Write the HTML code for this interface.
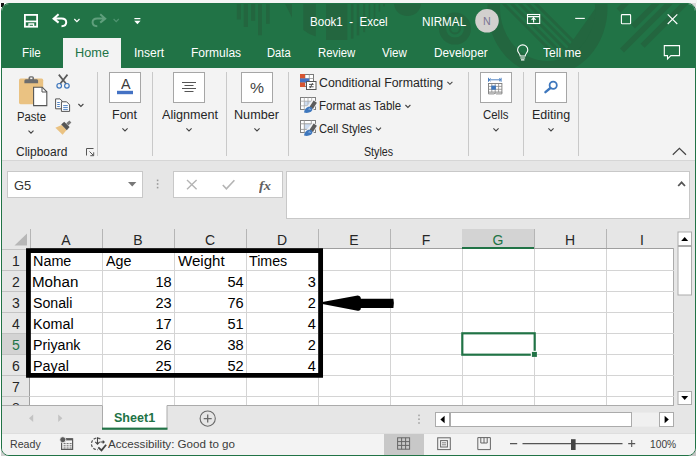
<!DOCTYPE html>
<html lang="en"><head><meta charset="utf-8"><title>Book1 - Excel</title>
<style>

html,body{margin:0;padding:0;background:#fff;}
body{width:699px;height:459px;overflow:hidden;position:relative;
 font-family:"Liberation Sans",sans-serif;}
#win{position:absolute;left:1px;top:3px;width:695px;height:453px;box-sizing:border-box;
 border:1px solid #217346;border-radius:8px;overflow:hidden;background:#e6e6e6;}
#win *{box-sizing:border-box;}
.abs{position:absolute;}
#titlebar{position:absolute;left:-1px;top:-1px;width:695px;height:65px;background:#217346;overflow:hidden;}
#hometab{position:absolute;left:61px;top:34px;width:58px;height:31px;background:#f3f3f3;}
#ribbon{position:absolute;left:-1px;top:64px;width:695px;height:93px;background:#f3f3f3;
 border-bottom:1px solid #d6d6d6;}
.sep{position:absolute;top:4px;width:1px;height:84px;background:#c9c9c9;}
.bigbtn{position:absolute;top:4px;width:32px;height:31px;background:#fff;border:1px solid #a6a6a6;}
#fbar{position:absolute;left:-1px;top:158px;width:695px;height:69px;background:#e6e6e6;}
.box{position:absolute;background:#fff;border:1px solid #c8c8c8;}
#grid{position:absolute;left:-1px;top:225px;width:673px;height:176px;background:#fff;overflow:hidden;}
#colhdr{position:absolute;left:0;top:0;width:673px;height:20px;background:#e6e6e6;}
#colhdr:after{content:'';position:absolute;left:29px;top:19px;width:644px;height:1px;background:#9f9f9f;}
#rowhdr{position:absolute;left:0;top:20px;width:29px;height:160px;background:#e6e6e6;border-right:1px solid #9f9f9f;}
.vl{position:absolute;top:20px;width:1px;height:160px;background:#d4d4d4;}
.hl{position:absolute;left:29px;height:1px;width:644px;background:#d4d4d4;}
.ch{position:absolute;top:0px;height:19px;width:1px;background:#b5b5b5;}
.rh{position:absolute;left:0;width:29px;height:1px;background:#c4c4c4;}
#tabsrow{position:absolute;left:-1px;top:401px;width:695px;height:29px;background:#e6e6e6;}
#tabsrow:before{content:'';position:absolute;left:0;top:0;width:673px;height:1px;background:#ababab;}
#status{position:absolute;left:-1px;top:429px;width:695px;height:24px;background:#f3f3f3;border-top:1px solid #dedede;}
.tx{position:absolute;white-space:pre;line-height:1;transform-origin:0 0;}
svg{position:absolute;left:0;top:0;overflow:visible;}

</style></head><body>
<div class="abs" style="left:0;top:0;width:697px;height:3px;background:#f5f5f5"></div>
<div class="abs" style="left:1px;top:3px;width:3px;height:4px;background:#111"></div>
<div class="abs" style="left:690px;top:3px;width:6px;height:6px;background:#dadada"></div>
<div class="abs" style="left:1px;top:450px;width:6px;height:6px;background:#cfcfcf"></div>
<div class="abs" style="left:690px;top:450px;width:6px;height:6px;background:#c4c4c4"></div>
<div id="win">
<div id="titlebar"><svg width="695" height="65" viewBox="1 3 695 65">
<g fill="#23663f" stroke="none">
<rect x="236.8" y="3" width="4.1" height="16.5"/>
<rect x="243.7" y="3" width="4.3" height="24.0"/>
<rect x="251.1" y="3" width="4.1" height="17.8"/>
<rect x="258" y="3" width="4.0" height="32.3"/>
<rect x="266" y="3" width="3.7" height="20.8"/>
<rect x="326" y="3" width="21.4" height="37.0"/>
<rect x="350.9" y="3" width="2.6" height="35.6"/>
<rect x="356.7" y="3" width="2.6" height="32.4"/>
<rect x="363.2" y="3" width="1.9" height="29.2"/>
<rect x="368.6" y="3" width="1.6" height="24.7"/>
<rect x="373.7" y="3" width="1.7" height="16.3"/>
<rect x="378.6" y="3" width="1.6" height="8.6"/>
<rect x="383.1" y="3" width="1.9" height="3.4"/>
<path d="M303.3 3 V30 Q309 34.5 315.8 36.6 V3 Z"/>
<path d="M284.6 3 H292 V17.7 Z"/>
<path d="M394 3 A13.5 13 0 0 0 421 3 Z"/>
</g>
<g fill="none" stroke="#23663f">
<circle cx="455" cy="28.6" r="12.5" stroke-width="7"/>
<circle cx="455" cy="28.6" r="5" stroke-width="2"/>
<path fill="#23663f" stroke="none" fill-rule="evenodd" d="M487.5 8 a60 67 0 1 0 120 0 a60 67 0 1 0 -120 0 Z M500 8 a47.5 53 0 1 0 95 0 a47.5 53 0 1 0 -95 0 Z"/>
</g>
<clipPath id="disc"><ellipse cx="547.5" cy="8" rx="48" ry="53.5"/></clipPath>
<g clip-path="url(#disc)" fill="#23663f" stroke="#23663f">
<path d="M500 0 L570 70" stroke-width="2.9" fill="none"/>
<path d="M508 0 L578 70" stroke-width="2.9" fill="none"/>
<path d="M516 0 L586 70" stroke-width="2.9" fill="none"/>
<path d="M524 0 L594 70" stroke-width="2.9" fill="none"/>
<path d="M532 0 L602 70" stroke-width="2.9" fill="none"/>
<path d="M566 50 L597 6 L640 6 L640 70 L580 70 Z" stroke="none"/>
</g>
<g fill="none" stroke="#23663f">
<path d="M622 50.6 L674 -1.4" stroke-width="5.6"/>
<path d="M642.6 45.7 L690.7 -2.4" stroke-width="5.6"/>
<path d="M633 26.4 L660 -0.6" stroke-width="5.6"/>
<path d="M618.6 10.4 L629.6 -0.6" stroke-width="5.6"/>
</g>
</svg></div>
<div id="hometab"></div>
<div id="ribbon">
<div class="sep" style="left:96px"></div>
<div class="sep" style="left:151px"></div>
<div class="sep" style="left:225px"></div>
<div class="sep" style="left:287px"></div>
<div class="sep" style="left:467px"></div>
<div class="sep" style="left:522px"></div>
<div class="sep" style="left:577px"></div>
<div class="bigbtn" style="left:108px"></div>
<div class="bigbtn" style="left:172px"></div>
<div class="bigbtn" style="left:240px"></div>
<div class="bigbtn" style="left:479px"></div>
<div class="bigbtn" style="left:534px"></div>
</div>
<div id="fbar">
<div class="box" style="left:6px;top:9px;width:136px;height:27px"></div>
<div class="box" style="left:172px;top:9px;width:110px;height:27px"></div>
<div class="box" style="left:285px;top:9px;width:404px;height:48px"></div>
</div>
<div id="grid">
<div id="colhdr"></div><div id="rowhdr"></div>
<div class="rh" style="top:20px"></div>
<div class="abs" style="left:672px;top:19px;width:1px;height:160px;background:#ababab"></div>
<div class="vl" style="left:101px"></div>
<div class="vl" style="left:173px"></div>
<div class="vl" style="left:245px"></div>
<div class="vl" style="left:317px"></div>
<div class="vl" style="left:389px"></div>
<div class="vl" style="left:461px"></div>
<div class="vl" style="left:533px"></div>
<div class="vl" style="left:605px"></div>
<div class="hl" style="top:41px"></div>
<div class="rh" style="top:41px"></div>
<div class="hl" style="top:62px"></div>
<div class="rh" style="top:62px"></div>
<div class="hl" style="top:83px"></div>
<div class="rh" style="top:83px"></div>
<div class="hl" style="top:104px"></div>
<div class="rh" style="top:104px"></div>
<div class="hl" style="top:125px"></div>
<div class="rh" style="top:125px"></div>
<div class="hl" style="top:146px"></div>
<div class="rh" style="top:146px"></div>
<div class="hl" style="top:167px"></div>
<div class="rh" style="top:167px"></div>
<div class="ch" style="left:29px"></div>
<div class="ch" style="left:101px"></div>
<div class="ch" style="left:173px"></div>
<div class="ch" style="left:245px"></div>
<div class="ch" style="left:317px"></div>
<div class="ch" style="left:389px"></div>
<div class="ch" style="left:461px"></div>
<div class="ch" style="left:533px"></div>
<div class="ch" style="left:605px"></div>
</div>
<div id="tabsrow"></div>
<div id="status"></div>
</div>
<svg width="699" height="459" viewBox="0 0 699 459">
<g fill="none" stroke="#fff">
<rect x="24.9" y="14.9" width="12.2" height="11.8" stroke-width="1.8"/>
<path d="M25 21.4 h12" stroke-width="1.7"/>
<path d="M29 26.8 v-2.8 h4.6 v2.8" stroke-width="1.3"/>
</g>
<path d="M58.6 14.2 L53.6 18.6 L58.6 22.6 M54 18.5 H61.5 C67.8 18.5 67.8 26.2 61.5 26.2" fill="none" stroke="#fff" stroke-width="2" stroke-linejoin="miter"/>
<path d="M74.30 19.00 l2.60 2.70 l2.60 -2.70" fill="none" stroke="#fff" stroke-width="1.2"/>
<path d="M100.2 14.2 L105.2 18.6 L100.2 22.6 M104.8 18.5 H97.3 C91 18.5 91 26.2 97.3 26.2" fill="none" stroke="#5f9f7c" stroke-width="2"/>
<path d="M113.60 19.00 l2.60 2.70 l2.60 -2.70" fill="none" stroke="#4f9370" stroke-width="1.2"/>
<path d="M134.4 18.6 h6" stroke="#fff" stroke-width="1.2"/>
<path d="M134.2 20.8 h6.4 l-3.2 3.4 z" fill="#fff"/>
<circle cx="487" cy="20.8" r="11.8" fill="#d2d0ce"/>
<g fill="none" stroke="#fff" stroke-width="1.1">
<rect x="527.5" y="14.5" width="12.2" height="9"/>
<path d="M527.5 16.6 h12.2 M533.6 22.4 v-4.4 M531.6 19.8 l2 -2 l2 2"/>
<path d="M575.2 18.4 h9.6"/>
<rect x="621.4" y="14.6" width="9.2" height="9.2" rx="0.8"/>
<path d="M667.7 14.4 l9.6 9.6 M677.3 14.4 l-9.6 9.6"/>
<path d="M664.3 45.6 h15.2 v10 h-8.6 l-3.4 3.4 v-3.4 h-3.2 z"/>
<path d="M520.2 56 c0 -2.4 -2.6 -3.2 -2.6 -6 a5.1 5.1 0 0 1 10.2 0 c0 2.8 -2.6 3.6 -2.6 6 z M520.3 58 h4.8 M521 59.9 h3.4"/>
</g>
<rect x="19" y="78.6" width="24.2" height="25.6" rx="1.6" fill="#eac282"/>
<path d="M24.4 83.2 v-2.4 q0 -1.5 1.5 -1.5 h2.6 v-1.3 q0 -1.8 1.8 -1.8 h1.9 q1.8 0 1.8 1.8 v1.3 h2.6 q1.5 0 1.5 1.5 v2.4 z" fill="#6d6d6d"/>
<rect x="30.2" y="77.5" width="2.2" height="1.6" fill="#f3f3f3"/>
<path d="M33.6 87.2 h8.6 l4.6 4.6 v13.8 h-13.2 z" fill="#fff" stroke="#555" stroke-width="1.1"/>
<path d="M42 87.4 v4.6 h4.6" fill="none" stroke="#555" stroke-width="1"/>
<path d="M28.50 130.60 l2.50 2.50 l2.50 -2.50" fill="none" stroke="#444" stroke-width="1.1"/>
<path d="M58.8 74.6 L66.3 84 M67.5 74.6 L60 84" stroke="#5a5a5a" stroke-width="1.7" fill="none"/>
<circle cx="59.2" cy="85.8" r="2.3" fill="none" stroke="#3e77bd" stroke-width="1.2"/>
<circle cx="66.9" cy="85.8" r="2.3" fill="none" stroke="#3e77bd" stroke-width="1.2"/>
<path d="M55.6 98.9 h4.4 l2.2 2.2 v7.7 h-6.6 z" fill="#fff" stroke="#555" stroke-width="1"/>
<path d="M61.4 101.8 h5.2 l3 3 v6.6 h-8.2 z" fill="#fff" stroke="#555" stroke-width="1"/>
<path d="M57.2 102.5 h2.6 M57.2 104.5 h2.6 M57.2 106.5 h2.6 M63.2 105.6 h4.6 M63.2 107.6 h4.6 M63.2 109.6 h4.6" stroke="#3e77bd" stroke-width="0.9"/>
<path d="M78.40 104.00 l2.50 2.50 l2.50 -2.50" fill="none" stroke="#444" stroke-width="1.1"/>
<path d="M55.4 127.8 L61.6 125 L66.6 130 L62.6 134.8 Z" fill="#eac282"/>
<path d="M61.2 124.6 L64.2 121.8 L69.6 127 L66.8 130.2 Z" fill="#555"/>
<path d="M66.2 123.2 L69.4 120.4 L71.4 122.4 L68.4 125.4 Z" fill="#7a7a7a"/>
<path d="M86.5 155.5 v-7 h7 M89.5 151.5 l4 4 M93.7 152.3 v3.4 h-3.4" fill="none" stroke="#555" stroke-width="1"/>
<rect x="117" y="90.8" width="16" height="3.4" fill="#4472c4"/>
<path d="M182 82.5 h14 M184.5 85.5 h9 M182 88.5 h14 M184.5 91.5 h9" stroke="#555" stroke-width="1"/>
<path d="M122.40 128.40 l2.60 2.60 l2.60 -2.60" fill="none" stroke="#444" stroke-width="1.1"/>
<path d="M186.40 128.40 l2.60 2.60 l2.60 -2.60" fill="none" stroke="#444" stroke-width="1.1"/>
<path d="M254.40 128.40 l2.60 2.60 l2.60 -2.60" fill="none" stroke="#444" stroke-width="1.1"/>
<path d="M493.40 128.40 l2.60 2.60 l2.60 -2.60" fill="none" stroke="#444" stroke-width="1.1"/>
<path d="M548.40 128.40 l2.60 2.60 l2.60 -2.60" fill="none" stroke="#444" stroke-width="1.1"/>
<rect x="300.5" y="74.5" width="13" height="12" fill="#fff" stroke="#7a7a7a" stroke-width="1"/>
<path d="M305 74.5 v12 M309.3 74.5 v12 M300.5 78.5 h13 M300.5 82.5 h13" stroke="#9a9a9a" stroke-width="0.8"/>
<rect x="300" y="74" width="5" height="4.5" fill="#d65532"/>
<rect x="300" y="78.5" width="5" height="4" fill="#4472c4"/>
<rect x="300" y="82.5" width="5" height="4.5" fill="#d65532"/>
<rect x="305" y="78.5" width="4.3" height="4" fill="#4472c4"/>
<rect x="306.5" y="81.5" width="9.5" height="8" fill="#fff" stroke="#555" stroke-width="1"/>
<path d="M309 84.4 h4.6 M309 86.8 h4.6 M312.6 83 l-2.6 5.2" stroke="#444" stroke-width="0.9" fill="none"/>
<rect x="300.5" y="97.5" width="15" height="12" fill="#fff" stroke="#7f7f7f" stroke-width="1"/>
<rect x="304.3" y="101.2" width="7.4" height="4.6" fill="#cddcf0"/>
<path d="M304.3 97.5 v12 M308 97.5 v12 M311.7 97.5 v12 M300.5 101.2 h15 M300.5 105.8 h15" stroke="#a8a8a8" stroke-width="0.8"/>
<path d="M313 99.2 L318 102.4 L313.6 109.6 L308.4 113.6 L302.6 113.4 L306 107.4 Z" fill="#f3f3f3"/>
<path d="M313.6 100.6 L316.9 102.8 L312.9 108.9 L309.6 106.7 Z" fill="#5b5b5b"/>
<path d="M304 112.6 q0.6 -4.2 4.2 -5.8 q2.4 -0.6 3.8 1 q1.2 2.2 -1 4 q-3 1.8 -7 0.8 z" fill="#3e77bd"/>
<path d="M308.6 109.2 q1.3 -0.6 2 0.3" fill="none" stroke="#cfe0f5" stroke-width="0.8"/>
<rect x="300.5" y="120.5" width="15" height="12" fill="#fff" stroke="#7f7f7f" stroke-width="1"/>
<rect x="304.3" y="123.8" width="7" height="5.6" fill="#cddcf0"/>
<path d="M304.3 120.5 v12 M311.3 120.5 v12 M300.5 123.8 h15 M300.5 129.4 h15" stroke="#9a9a9a" stroke-width="0.9"/>
<path d="M313 122.2 L318 125.4 L313.6 132.6 L308.4 136.6 L302.6 136.4 L306 130.4 Z" fill="#f3f3f3"/>
<path d="M313.6 123.6 L316.9 125.8 L312.9 131.9 L309.6 129.7 Z" fill="#5b5b5b"/>
<path d="M304 135.6 q0.6 -4.2 4.2 -5.8 q2.4 -0.6 3.8 1 q1.2 2.2 -1 4 q-3 1.8 -7 0.8 z" fill="#3e77bd"/>
<path d="M308.6 132.2 q1.3 -0.6 2 0.3" fill="none" stroke="#cfe0f5" stroke-width="0.8"/>
<path d="M447.40 81.80 l2.50 2.50 l2.50 -2.50" fill="none" stroke="#444" stroke-width="1.1"/>
<path d="M405.40 105.00 l2.50 2.50 l2.50 -2.50" fill="none" stroke="#444" stroke-width="1.1"/>
<path d="M376.00 127.60 l2.50 2.50 l2.50 -2.50" fill="none" stroke="#444" stroke-width="1.1"/>
<path d="M488.5 79.8 h12.6 M488.5 77.8 v4 M501.1 77.8 v4 M490.6 78.4 l-1.6 1.4 l1.6 1.4 M499 78.4 l1.6 1.4 l-1.6 1.4" fill="none" stroke="#3e77bd" stroke-width="0.9"/>
<rect x="488.5" y="83.5" width="13.4" height="8.6" fill="#fff" stroke="#7a7a7a" stroke-width="0.9"/>
<path d="M491.8 83.5 v8.6 M495.2 83.5 v8.6 M498.6 83.5 v8.6 M488.5 86.4 h13.4 M488.5 89.3 h13.4" stroke="#8a8a8a" stroke-width="0.8"/>
<rect x="491.3" y="85.6" width="4.6" height="4.1" fill="#3e77bd"/>
<path d="M488.5 92.1 v1.8 h5.6 l1.1 -0.9 l1.1 0.9 h5.6 v-1.8" fill="none" stroke="#7a7a7a" stroke-width="0.9"/>
<circle cx="553.2" cy="85.3" r="3.6" fill="none" stroke="#3e77bd" stroke-width="1.8"/>
<path d="M550.4 88 L545.4 92.2" stroke="#3e77bd" stroke-width="2.3" stroke-linecap="round"/>
<path d="M672.8 154.8 l6.6 -6.4 l6.6 6.4" fill="none" stroke="#444" stroke-width="1.2"/>
<path d="M128 182 h8.4 l-4.2 4.4 z" fill="#777"/>
<g fill="#9a9a9a"><rect x="156.8" y="179.6" width="1.6" height="1.6"/><rect x="156.8" y="183.2" width="1.6" height="1.6"/><rect x="156.8" y="186.8" width="1.6" height="1.6"/></g>
<path d="M187 180 l9.6 9.2 M196.6 180 l-9.6 9.2" stroke="#b4b4b4" stroke-width="1.4" fill="none"/>
<path d="M222.8 185 l3.6 3.8 l8 -8.6" stroke="#b4b4b4" stroke-width="1.6" fill="none"/>
<path d="M678.2 186 l3.4 -3.6 l3.4 3.6" stroke="#555" stroke-width="1.8" fill="none"/>
<path d="M27 233.5 V245.5 H14.5 Z" fill="#b7b7b7"/>
<rect x="462" y="229" width="72" height="19" fill="#d3d3d3"/>
<rect x="462" y="247" width="72" height="2" fill="#217346"/>
<rect x="2" y="334" width="27" height="20" fill="#d3d3d3"/>
<rect x="28" y="334" width="2" height="20" fill="#217346"/>
<path d="M28.45 250.55 H320.62 V375.45 H28.45 Z" fill="none" stroke="#000" stroke-width="4.8"/>
<path d="M322.4 302 L356.3 295.8 Q358 295.3 359.4 296 Q360.8 296.8 360.9 298.8 L393.4 298.8 Q394.4 303.4 393.4 307.9 L360.9 307.9 Q360.8 310 359.4 310.6 Q358 311.1 356.3 310.5 L322.4 304.1 Z" fill="#000"/>
<rect x="462.3" y="333.3" width="72.4" height="21.4" fill="none" stroke="#217346" stroke-width="2.2"/>
<rect x="530.8" y="350.8" width="6.4" height="6.4" fill="#fff"/>
<rect x="531.9" y="351.9" width="5" height="5" fill="#217346"/>
<rect x="678" y="232" width="13.5" height="13.5" fill="#fff" stroke="#ababab" stroke-width="1"/>
<path d="M681.2 241 h7 l-3.5 -4 z" fill="#000"/>
<rect x="678" y="246.5" width="13.5" height="48.5" fill="#fff" stroke="#ababab" stroke-width="1"/>
<rect x="678" y="391.5" width="13.5" height="13" fill="#fff" stroke="#ababab" stroke-width="1"/>
<path d="M681.2 396 h7 l-3.5 4 z" fill="#000"/>
<path d="M33.2 414.6 v7.4 l-4.2 -3.7 z" fill="#c3c3c3"/>
<path d="M58.2 414.6 v7.4 l4.2 -3.7 z" fill="#c3c3c3"/>
<rect x="102.5" y="405" width="64.5" height="23" fill="#fff"/>
<path d="M102.5 405.5 v23 M167 405.5 v23" stroke="#ababab" stroke-width="1"/>
<rect x="102" y="427.6" width="65.5" height="2.2" fill="#217346"/>
<circle cx="207.7" cy="418.6" r="7.6" fill="none" stroke="#6a6a6a" stroke-width="1.1"/>
<path d="M203.7 418.6 h8 M207.7 414.6 v8" stroke="#6a6a6a" stroke-width="1.3"/>
<g fill="#a5a5a5"><rect x="418.2" y="414.6" width="1.6" height="1.6"/><rect x="418.2" y="418.4" width="1.6" height="1.6"/><rect x="418.2" y="422.2" width="1.6" height="1.6"/></g>
<rect x="450" y="412.6" width="209" height="14" fill="#f0f0f0"/>
<rect x="435.5" y="412.5" width="14" height="14" fill="#fff" stroke="#ababab" stroke-width="1"/>
<path d="M444.6 415.8 v7.4 l-4.2 -3.7 z" fill="#000"/>
<rect x="450.5" y="412.5" width="181" height="14" fill="#fff" stroke="#ababab" stroke-width="1"/>
<rect x="659.5" y="412.5" width="14" height="14" fill="#fff" stroke="#ababab" stroke-width="1"/>
<path d="M664.6 415.8 v7.4 l4.2 -3.7 z" fill="#000"/>
<rect x="61.6" y="438.8" width="11" height="10.6" fill="#f3f3f3" stroke="#5a5a5a" stroke-width="1.2"/>
<path d="M65.5 439.4 h7" stroke="#5a5a5a" stroke-width="2"/>
<path d="M63.6 443.6 h2 M66.6 443.6 h2 M69.6 443.6 h2 M63.6 445.8 h2 M66.6 445.8 h2 M69.6 445.8 h2 M63.6 448 h2 M66.6 448 h2 M69.6 448 h2" stroke="#6a6a6a" stroke-width="1"/>
<circle cx="62.8" cy="439.7" r="3" fill="#5a5a5a" stroke="#f3f3f3" stroke-width="0.8"/>
<path d="M100.4 439 A5.8 5.8 0 1 0 98 449.6" fill="none" stroke="#555" stroke-width="1.2" stroke-dasharray="2.8 1.5"/>
<path d="M97.5 437.3 V444 M95.3 441.9 l2.2 2.3 l2.2 -2.3 M100.4 442 h3.6 M102.7 440.6 l1.5 1.4 l-1.5 1.4" fill="none" stroke="#444" stroke-width="1.1"/>
<path d="M98.3 447.3 L101.5 450.4 L106.1 444.7" fill="none" stroke="#444" stroke-width="1.8"/>
<rect x="384" y="434" width="40" height="21" fill="#c8c8c8"/>
<rect x="397.6" y="437.8" width="12" height="11.4" fill="none" stroke="#666" stroke-width="1"/>
<path d="M401.6 437.8 v11.4 M405.6 437.8 v11.4 M397.6 441.6 h12 M397.6 445.4 h12" stroke="#666" stroke-width="1"/>
<rect x="437.7" y="437.8" width="12.6" height="11.8" fill="none" stroke="#666" stroke-width="1"/>
<rect x="440.6" y="440.6" width="6.8" height="6.4" fill="none" stroke="#666" stroke-width="1"/>
<path d="M442 442.8 h4 M442 444.8 h4" stroke="#666" stroke-width="0.8"/>
<path d="M477.8 437.6 v12 h12.6 v-12 z M480.8 437.6 v5.4 h6.4 v-5.4 M484 437.6 v5.4" fill="none" stroke="#666" stroke-width="1"/>
<path d="M510 443.6 h7.2 M522.5 443.6 h100 M628.2 443.6 h7 M631.7 440.1 v7" stroke="#555" stroke-width="1.1"/>
<rect x="571" y="439.2" width="4.6" height="10.8" fill="#444"/>
</svg>
<div id="texts" style="position:absolute;left:0;top:0;width:699px;height:459px">
<span class="tx" id="t0" style="left:309.85px;top:16.00px;font-size:12px;color:#fff;font-weight:400;transform:scaleX(0.9624);">Book1  -  Excel</span>
<span class="tx" id="t1" style="left:421.88px;top:16.00px;font-size:12px;color:#fff;font-weight:400;transform:scaleX(0.9732);">NIRMAL</span>
<span class="tx" id="t2" style="left:483.43px;top:16.00px;font-size:10.5px;color:#7a7592;font-weight:400;transform:scaleX(1.0194);">N</span>
<span class="tx" id="t3" style="left:21.75px;top:47.00px;font-size:12px;color:#fff;font-weight:400;transform:scaleX(0.9740);">File</span>
<span class="tx" id="t4" style="left:134.11px;top:47.00px;font-size:12px;color:#fff;font-weight:400;transform:scaleX(1.0059);">Insert</span>
<span class="tx" id="t5" style="left:190.62px;top:47.00px;font-size:12px;color:#fff;font-weight:400;transform:scaleX(1.0019);">Formulas</span>
<span class="tx" id="t6" style="left:266.98px;top:47.00px;font-size:12px;color:#fff;font-weight:400;transform:scaleX(0.9337);">Data</span>
<span class="tx" id="t7" style="left:318.42px;top:47.00px;font-size:12px;color:#fff;font-weight:400;transform:scaleX(0.9475);">Review</span>
<span class="tx" id="t8" style="left:382.35px;top:47.00px;font-size:12px;color:#fff;font-weight:400;transform:scaleX(0.9677);">View</span>
<span class="tx" id="t9" style="left:433.87px;top:47.00px;font-size:12px;color:#fff;font-weight:400;transform:scaleX(0.9804);">Developer</span>
<span class="tx" id="t10" style="left:543.01px;top:47.00px;font-size:12px;color:#fff;font-weight:400;transform:scaleX(1.0027);">Tell me</span>
<span class="tx" id="t11" style="left:75.22px;top:47.00px;font-size:12px;color:#217346;font-weight:400;transform:scaleX(1.0611);">Home</span>
<span class="tx" id="t12" style="left:16.75px;top:111.00px;font-size:12px;color:#262626;font-weight:400;transform:scaleX(0.9428);">Paste</span>
<span class="tx" id="t13" style="left:16.16px;top:146.00px;font-size:12px;color:#262626;font-weight:400;transform:scaleX(0.9995);">Clipboard</span>
<span class="tx" id="t14" style="left:112.34px;top:109.00px;font-size:12px;color:#262626;font-weight:400;transform:scaleX(1.0422);">Font</span>
<span class="tx" id="t15" style="left:161.70px;top:109.00px;font-size:12px;color:#262626;font-weight:400;transform:scaleX(1.0519);">Alignment</span>
<span class="tx" id="t16" style="left:234.33px;top:109.00px;font-size:12px;color:#262626;font-weight:400;transform:scaleX(1.0518);">Number</span>
<span class="tx" id="t17" style="left:319.14px;top:77.00px;font-size:12px;color:#262626;font-weight:400;transform:scaleX(1.0287);">Conditional Formatting</span>
<span class="tx" id="t18" style="left:318.96px;top:100.00px;font-size:12px;color:#262626;font-weight:400;transform:scaleX(0.9585);">Format as Table</span>
<span class="tx" id="t19" style="left:319.31px;top:123.00px;font-size:12px;color:#262626;font-weight:400;transform:scaleX(0.9340);">Cell Styles</span>
<span class="tx" id="t20" style="left:364.00px;top:146.00px;font-size:12px;color:#262626;font-weight:400;transform:scaleX(0.8895);">Styles</span>
<span class="tx" id="t21" style="left:483.39px;top:109.00px;font-size:12px;color:#262626;font-weight:400;transform:scaleX(0.9512);">Cells</span>
<span class="tx" id="t22" style="left:531.79px;top:109.00px;font-size:12px;color:#262626;font-weight:400;transform:scaleX(1.0385);">Editing</span>
<span class="tx" id="t23" style="left:120.82px;top:77.00px;font-size:14px;color:#3b3b3b;font-weight:400;transform:scaleX(1.0234);">A</span>
<span class="tx" id="t24" style="left:250.14px;top:81.00px;font-size:14.5px;color:#444;font-weight:400;transform:scaleX(1.0858);">%</span>
<span class="tx" id="t25" style="left:13.94px;top:179.00px;font-size:13px;color:#333;font-weight:400;transform:scaleX(0.9951);">G5</span>
<span class="tx" id="t26" style="left:258.84px;top:179.00px;font-size:13px;color:#606060;font-weight:700;transform:scaleX(1.1123);font-style:italic;font-family:'Liberation Serif',serif;">fx</span>
<span class="tx" id="t27" style="left:46.00px;width:40px;text-align:center;top:233.00px;font-size:14px;color:#262626;font-weight:400;">A</span>
<span class="tx" id="t28" style="left:118.00px;width:40px;text-align:center;top:233.00px;font-size:14px;color:#262626;font-weight:400;">B</span>
<span class="tx" id="t29" style="left:190.00px;width:40px;text-align:center;top:233.00px;font-size:14px;color:#262626;font-weight:400;">C</span>
<span class="tx" id="t30" style="left:262.00px;width:40px;text-align:center;top:233.00px;font-size:14px;color:#262626;font-weight:400;">D</span>
<span class="tx" id="t31" style="left:334.00px;width:40px;text-align:center;top:233.00px;font-size:14px;color:#262626;font-weight:400;">E</span>
<span class="tx" id="t32" style="left:406.00px;width:40px;text-align:center;top:233.00px;font-size:14px;color:#262626;font-weight:400;">F</span>
<span class="tx" id="t33" style="left:478.00px;width:40px;text-align:center;top:233.00px;font-size:14px;color:#217346;font-weight:400;">G</span>
<span class="tx" id="t34" style="left:550.00px;width:40px;text-align:center;top:233.00px;font-size:14px;color:#262626;font-weight:400;">H</span>
<span class="tx" id="t35" style="left:622.00px;width:40px;text-align:center;top:233.00px;font-size:14px;color:#262626;font-weight:400;">I</span>
<span class="tx" id="t36" style="left:-4.00px;width:40px;text-align:center;top:254.00px;font-size:14px;color:#262626;font-weight:400;">1</span>
<span class="tx" id="t37" style="left:-4.00px;width:40px;text-align:center;top:275.00px;font-size:14px;color:#262626;font-weight:400;">2</span>
<span class="tx" id="t38" style="left:-4.00px;width:40px;text-align:center;top:296.00px;font-size:14px;color:#262626;font-weight:400;">3</span>
<span class="tx" id="t39" style="left:-4.00px;width:40px;text-align:center;top:317.00px;font-size:14px;color:#262626;font-weight:400;">4</span>
<span class="tx" id="t40" style="left:-4.00px;width:40px;text-align:center;top:338.00px;font-size:14px;color:#217346;font-weight:400;">5</span>
<span class="tx" id="t41" style="left:-4.00px;width:40px;text-align:center;top:359.00px;font-size:14px;color:#262626;font-weight:400;">6</span>
<span class="tx" id="t42" style="left:-4.00px;width:40px;text-align:center;top:380.00px;font-size:14px;color:#262626;font-weight:400;">7</span>
<div style="position:absolute;left:0;top:0;width:40px;height:405px;overflow:hidden"><span class="tx" id="t43" style="left:-4.00px;width:40px;text-align:center;top:401.00px;font-size:14px;color:#262626;font-weight:400;">8</span></div>
<span class="tx" id="t44" style="left:32.66px;top:254.00px;font-size:14px;color:#000;font-weight:400;transform:scaleX(1.0268);">Name</span>
<span class="tx" id="t45" style="left:105.82px;top:254.00px;font-size:14px;color:#000;font-weight:400;transform:scaleX(1.0193);">Age</span>
<span class="tx" id="t46" style="left:177.63px;top:254.00px;font-size:14px;color:#000;font-weight:400;transform:scaleX(1.0764);">Weight</span>
<span class="tx" id="t47" style="left:249.41px;top:254.00px;font-size:14px;color:#000;font-weight:400;transform:scaleX(1.0171);">Times</span>
<span class="tx" id="t48" style="left:32.47px;top:275.00px;font-size:14px;color:#000;font-weight:400;transform:scaleX(1.0819);">Mohan</span>
<span class="tx" id="t49" style="right:527.30px;top:275.00px;font-size:14px;transform-origin:100% 0;transform:scaleX(1.04);color:#000;font-weight:400;">18</span>
<span class="tx" id="t50" style="right:455.30px;top:275.00px;font-size:14px;transform-origin:100% 0;transform:scaleX(1.04);color:#000;font-weight:400;">54</span>
<span class="tx" id="t51" style="right:383.30px;top:275.00px;font-size:14px;transform-origin:100% 0;transform:scaleX(1.04);color:#000;font-weight:400;">3</span>
<span class="tx" id="t52" style="left:33.14px;top:296.00px;font-size:14px;color:#000;font-weight:400;transform:scaleX(1.0121);">Sonali</span>
<span class="tx" id="t53" style="right:527.30px;top:296.00px;font-size:14px;transform-origin:100% 0;transform:scaleX(1.04);color:#000;font-weight:400;">23</span>
<span class="tx" id="t54" style="right:455.30px;top:296.00px;font-size:14px;transform-origin:100% 0;transform:scaleX(1.04);color:#000;font-weight:400;">76</span>
<span class="tx" id="t55" style="right:383.30px;top:296.00px;font-size:14px;transform-origin:100% 0;transform:scaleX(1.04);color:#000;font-weight:400;">2</span>
<span class="tx" id="t56" style="left:32.68px;top:317.00px;font-size:14px;color:#000;font-weight:400;transform:scaleX(1.0256);">Komal</span>
<span class="tx" id="t57" style="right:527.30px;top:317.00px;font-size:14px;transform-origin:100% 0;transform:scaleX(1.04);color:#000;font-weight:400;">17</span>
<span class="tx" id="t58" style="right:455.30px;top:317.00px;font-size:14px;transform-origin:100% 0;transform:scaleX(1.04);color:#000;font-weight:400;">51</span>
<span class="tx" id="t59" style="right:383.30px;top:317.00px;font-size:14px;transform-origin:100% 0;transform:scaleX(1.04);color:#000;font-weight:400;">4</span>
<span class="tx" id="t60" style="left:32.75px;top:338.00px;font-size:14px;color:#000;font-weight:400;transform:scaleX(1.0167);">Priyank</span>
<span class="tx" id="t61" style="right:527.30px;top:338.00px;font-size:14px;transform-origin:100% 0;transform:scaleX(1.04);color:#000;font-weight:400;">26</span>
<span class="tx" id="t62" style="right:455.30px;top:338.00px;font-size:14px;transform-origin:100% 0;transform:scaleX(1.04);color:#000;font-weight:400;">38</span>
<span class="tx" id="t63" style="right:383.30px;top:338.00px;font-size:14px;transform-origin:100% 0;transform:scaleX(1.04);color:#000;font-weight:400;">2</span>
<span class="tx" id="t64" style="left:32.67px;top:359.00px;font-size:14px;color:#000;font-weight:400;transform:scaleX(1.0232);">Payal</span>
<span class="tx" id="t65" style="right:527.30px;top:359.00px;font-size:14px;transform-origin:100% 0;transform:scaleX(1.04);color:#000;font-weight:400;">25</span>
<span class="tx" id="t66" style="right:455.30px;top:359.00px;font-size:14px;transform-origin:100% 0;transform:scaleX(1.04);color:#000;font-weight:400;">52</span>
<span class="tx" id="t67" style="right:383.30px;top:359.00px;font-size:14px;transform-origin:100% 0;transform:scaleX(1.04);color:#000;font-weight:400;">4</span>
<span class="tx" id="t68" style="left:114.07px;top:412.00px;font-size:12px;color:#217346;font-weight:700;transform:scaleX(1.0448);">Sheet1</span>
<span class="tx" id="t69" style="left:10.40px;top:439.00px;font-size:11.5px;color:#3b3b3b;font-weight:400;transform:scaleX(0.9231);">Ready</span>
<span class="tx" id="t70" style="left:108.48px;top:439.00px;font-size:11.5px;color:#3b3b3b;font-weight:400;transform:scaleX(1.0084);">Accessibility: Good to go</span>
<span class="tx" id="t71" style="left:649.97px;top:439.00px;font-size:11.5px;color:#3b3b3b;font-weight:400;transform:scaleX(0.8908);">100%</span>
</div>
</body></html>
